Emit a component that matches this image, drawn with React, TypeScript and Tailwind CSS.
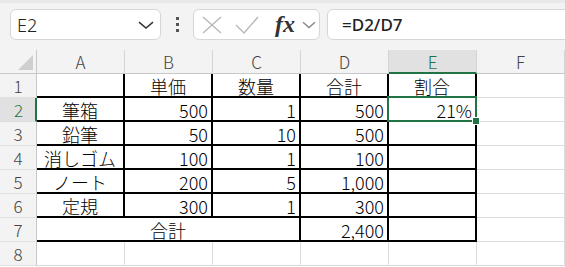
import React from "react";

type Cell = { v?: string; align?: "c" | "r"; span?: number; box?: boolean; sel?: boolean };

const cols = ["A", "B", "C", "D", "E", "F"];

const rows: Cell[][] = [
  [{ box: true }, { v: "単価", align: "c", box: true }, { v: "数量", align: "c", box: true }, { v: "合計", align: "c", box: true }, { v: "割合", align: "c", box: true }, {}],
  [{ v: "筆箱", align: "c", box: true }, { v: "500", align: "r", box: true }, { v: "1", align: "r", box: true }, { v: "500", align: "r", box: true }, { v: "21%", align: "r", box: true, sel: true }, {}],
  [{ v: "鉛筆", align: "c", box: true }, { v: "50", align: "r", box: true }, { v: "10", align: "r", box: true }, { v: "500", align: "r", box: true }, { box: true }, {}],
  [{ v: "消しゴム", align: "c", box: true }, { v: "100", align: "r", box: true }, { v: "1", align: "r", box: true }, { v: "100", align: "r", box: true }, { box: true }, {}],
  [{ v: "ノート", align: "c", box: true }, { v: "200", align: "r", box: true }, { v: "5", align: "r", box: true }, { v: "1,000", align: "r", box: true }, { box: true }, {}],
  [{ v: "定規", align: "c", box: true }, { v: "300", align: "r", box: true }, { v: "1", align: "r", box: true }, { v: "300", align: "r", box: true }, { box: true }, {}],
  [{ v: "合計", align: "c", box: true, span: 3 }, { v: "2,400", align: "r", box: true }, { box: true }, {}],
  [{}, {}, {}, {}, {}, {}],
];

const cellFont = "font-['Noto_Sans_CJK_JP',sans-serif] font-light text-[18px] leading-none text-black";
const headFont = "font-['Noto_Sans_CJK_JP',sans-serif] font-light text-[17px] leading-none";

export default function App() {
  return (
    <div className="w-[565px] h-[267px] overflow-hidden bg-white">
      {/* Toolbar */}
      <div className="h-[50px] bg-[#f3f3f3] relative overflow-hidden">
        <div className="h-[3px] bg-[#e9e9e9]" />
        <div className="flex items-center pt-[6px] pl-[10px]">
          <div className="shrink-0 w-[151px] h-[31px] bg-white border border-[#d6d6d6] rounded-[6px] flex items-center pl-[6px] pr-[6px]">
            <span className="flex-1 font-['Noto_Sans',sans-serif] font-light text-[18px] text-[#222] leading-none">E2</span>
            <svg width="16" height="8" viewBox="0 0 16 8">
              <path d="M1 1.2 L8 7 L15 1.2" fill="none" stroke="#333" strokeWidth="1.5" />
            </svg>
          </div>
          <div className="shrink-0 w-[32px] flex flex-col items-center gap-[3px]">
            <span className="w-[3px] h-[3px] bg-[#555]" />
            <span className="w-[3px] h-[3px] bg-[#555]" />
            <span className="w-[3px] h-[3px] bg-[#555]" />
          </div>
          <div className="shrink-0 w-[127px] h-[31px] bg-white border border-[#d6d6d6] rounded-[6px] flex items-center">
            <svg className="ml-[8px]" width="20" height="18" viewBox="0 0 20 18">
              <path d="M1 1 L19 17 M19 1 L1 17" stroke="#b8b8b8" strokeWidth="1.4" fill="none" />
            </svg>
            <svg className="ml-[13px]" width="24" height="18" viewBox="0 0 24 18">
              <path d="M1 9 L9 17 L23 1" stroke="#b8b8b8" strokeWidth="1.4" fill="none" />
            </svg>
            <span className="ml-[16px] font-['Liberation_Serif',serif] italic font-bold text-[24px] leading-none text-[#333] -mt-[2px]">fx</span>
            <svg className="ml-[7px]" width="14" height="8" viewBox="0 0 14 8">
              <path d="M1 1.2 L7 6.5 L13 1.2" fill="none" stroke="#888" strokeWidth="1.4" />
            </svg>
          </div>
          <div className="shrink-0 ml-[7px] w-[260px] h-[31px] bg-white border border-[#d6d6d6] rounded-[6px] flex items-center pl-[14px]">
            <span className="font-['Noto_Sans',sans-serif] font-medium text-[17px] text-[#222] leading-none">=D2/D7</span>
          </div>
        </div>
      </div>

      {/* Sheet */}
      <div className="grid grid-cols-[37px_88px_88px_88px_88px_88px_88px] auto-rows-[24px]">
        {/* Column headers */}
        <div className="bg-[#f3f3f3] border-r border-b border-[#c8c8c8] flex items-end justify-end pr-[3px] pb-[3px]">
          <svg width="15" height="15" viewBox="0 0 15 15">
            <path d="M0 15 L15 0 L15 15 Z" fill="#cfcfcf" />
          </svg>
        </div>
        {cols.map((c) =>
          c === "E" ? (
            <div key={c} className={`bg-[#e1e1e1] border-r border-[#d4d4d4] border-b-2 border-b-[#217346] flex items-center justify-center text-[#217346] ${headFont}`}>
              {c}
            </div>
          ) : (
            <div key={c} className={`bg-[#f3f3f3] border-r border-b border-[#d4d4d4] border-b-[#c8c8c8] flex items-center justify-center text-[#444] ${headFont}`}>
              {c}
            </div>
          )
        )}

        {rows.map((row, ri) => (
          <React.Fragment key={ri}>
            {ri === 1 ? (
              <div className={`bg-[#e1e1e1] border-r-2 border-r-[#217346] border-b border-[#dcdcdc] flex items-center justify-center pl-[2px] text-[#217346] ${headFont}`}>
                {ri + 1}
              </div>
            ) : (
              <div className={`bg-[#f3f3f3] border-r border-r-[#c8c8c8] border-b border-[#e0e0e0] flex items-center justify-center text-[#444] ${headFont}`}>
                {ri + 1}
              </div>
            )}
            {row.map((cell, ci) => (
              <div
                key={ci}
                className={`relative flex items-center ${cellFont} ${
                  cell.box ? "border-r-2 border-b-2 border-black" : "border-r border-b border-[#dcdcdc]"
                } ${cell.align === "r" ? "justify-end pr-[3px]" : "justify-center"} ${
                  cell.span === 3 ? "col-span-3" : ""
                }`}
              >
                <span className="pt-[1px]">{cell.v}</span>
                {cell.sel && (
                  <div className="absolute -top-[2px] -left-[2px] -right-[2px] -bottom-[2px] border-2 border-[#217346] z-10">
                    <div className="absolute -right-[5px] -bottom-[5px] w-[8px] h-[8px] bg-[#217346] border border-white" />
                  </div>
                )}
              </div>
            ))}
          </React.Fragment>
        ))}
      </div>
    </div>
  );
}
